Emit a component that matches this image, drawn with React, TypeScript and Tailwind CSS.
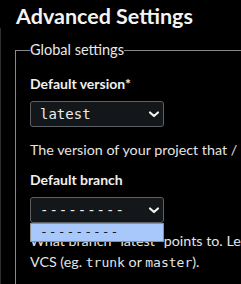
import React from "react";

function Chevron() {
  return (
    <svg width="12" height="12" viewBox="0 0 12 12" className="shrink-0">
      <path d="M2 4.5 L6 8 L10 4.5" fill="none" stroke="#f2f2f2" strokeWidth="2.2" strokeLinecap="round" strokeLinejoin="round" />
    </svg>
  );
}

export default function App() {
  return (
    <div className="w-[241px] h-[284px] overflow-hidden bg-black text-[#e4e4e4] font-['Lato','Noto_Sans',sans-serif]">
      {/* Page title */}
      <h1 className="pl-4 pt-[3px] h-[28px] text-[21.5px] leading-[26px] font-bold text-[#f4f4f4] whitespace-nowrap">
        Advanced Settings
      </h1>

      <div className="border-l border-[#2e2e2e] pt-[12px]">
        <fieldset className="ml-[14px] w-[300px] border border-[#8a8a8a] pl-[14px] pb-6">
          <legend className="text-[14.5px] leading-[20px] text-[#e8e8e8]">Global settings</legend>

          {/* Default version */}
          <div className="pt-[14px] text-[14px] font-bold leading-[20px] text-[#f0f0f0]">Default version*</div>
          <div className="mt-[7px] flex h-[26px] w-[134px] items-center justify-between rounded-[3px] border border-[#5b6066] bg-[#131719] pl-[9px] pr-[3px]">
            <span className="font-['DejaVu_Sans_Mono',monospace] text-[14px] text-[#ececec]">latest</span>
            <Chevron />
          </div>
          <p className="mt-[13px] text-[14.3px] leading-[20px] whitespace-nowrap">The version of your project that / </p>

          {/* Default branch */}
          <div className="pt-[10px] text-[14px] font-bold leading-[20px] text-[#f0f0f0]">Default branch</div>
          <div className="relative mt-[7px] w-[134px]">
            <div className="flex h-[26px] w-[134px] items-center justify-between rounded-[3px] border border-[#5b6066] bg-[#131719] pl-[9px] pr-[3px]">
              <span className="font-['DejaVu_Sans_Mono',monospace] text-[14px] tracking-[1px] text-[#ececec]">---------</span>
              <Chevron />
            </div>
            <div className="absolute left-0 top-[26px] z-10 h-[19px] w-[134px] border border-[#8e8e8e] bg-[#a8c7fa] pl-[9px] text-[13px] leading-[15px] text-[#1a1a1a] font-['DejaVu_Sans_Mono',monospace] tracking-[1px]">
              ---------
            </div>
          </div>
          <p className="mt-[7px] text-[14.3px] leading-[21px] whitespace-nowrap">
            What branch "latest" points to. Leave empty to use the default value for your
          </p>
          <p className="text-[14.3px] leading-[21px] whitespace-nowrap">
            VCS (eg. <code className="font-['DejaVu_Sans_Mono',monospace] text-[13px]">trunk</code> or{" "}
            <code className="font-['DejaVu_Sans_Mono',monospace] text-[13px]">master</code>).
          </p>
        </fieldset>
      </div>
    </div>
  );
}
